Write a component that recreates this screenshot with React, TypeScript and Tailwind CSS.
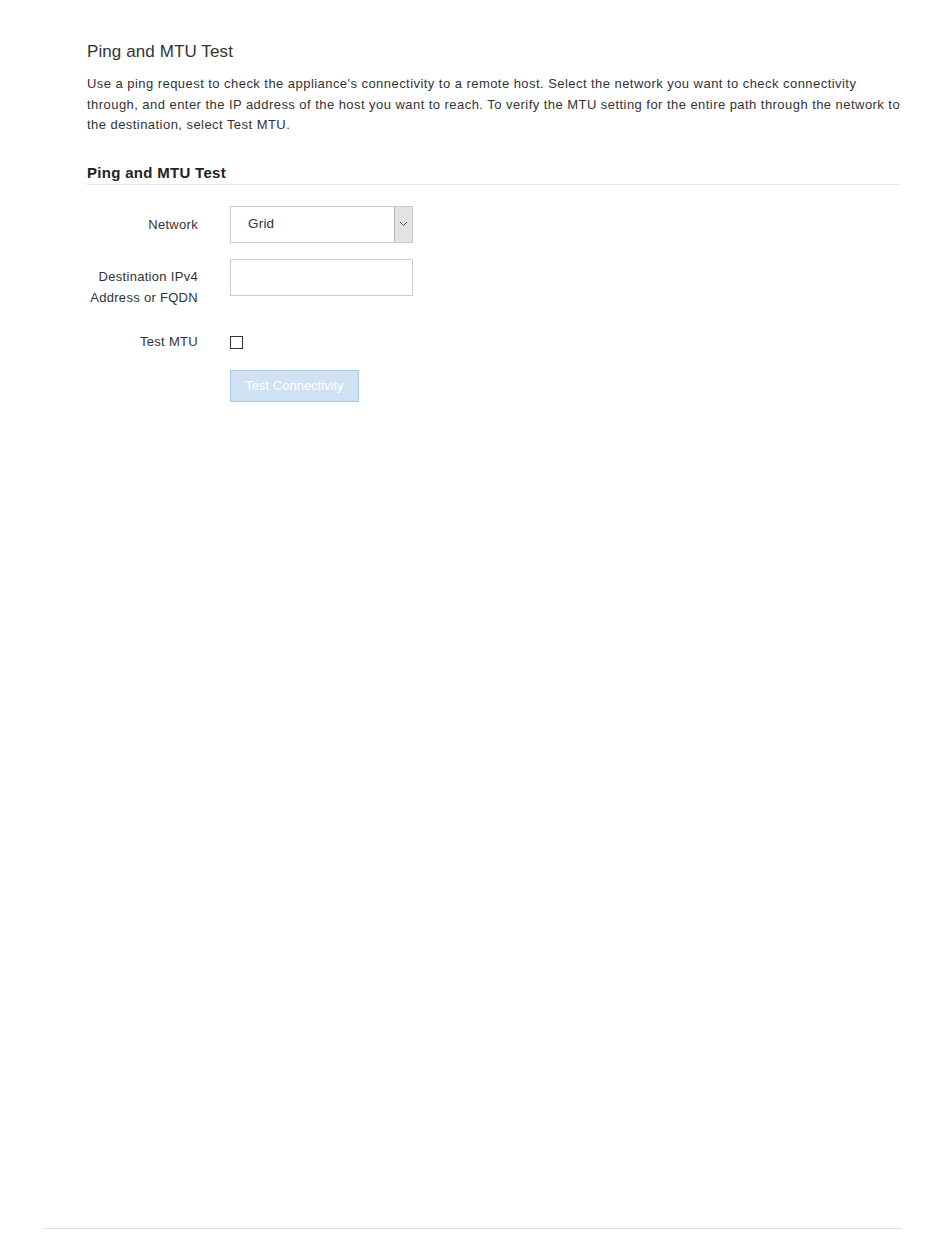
import React from "react";

export default function App() {
  return (
    <div
      className="flex h-[1248px] w-[950px] flex-col bg-white text-[#333]"
      style={{ fontFamily: '"Liberation Sans", Arial, sans-serif' }}
    >
      <div className="flex-1 pl-[87px] pr-[50px] pt-[40px]">
        <h1 className="text-[17px] leading-[24px] font-normal tracking-[0.1px] text-[#333]">Ping and MTU Test</h1>
        <p className="mt-[10px] -mr-[6px] text-[13px] leading-[20.5px] tracking-[0.45px] text-[#333]">
          Use a ping request to check the appliance's connectivity to a remote host. Select the network you want to check connectivity
          through, and enter the IP address of the host you want to reach. To verify the MTU setting for the entire path through the network to
          the destination, select Test MTU.
        </p>
        <h2 className="mt-[27px] border-b border-[#e5e5e5] pb-[1px] text-[15px] leading-[20px] font-bold tracking-[0.3px] text-[#222]">
          Ping and MTU Test
        </h2>

        <div className="mt-[21px] flex items-center gap-[32px]">
          <label className="w-[111px] text-right text-[13px] leading-[21px] tracking-[0.3px]">Network</label>
          <div className="flex h-[37px] w-[183px] items-stretch border border-[#cccccc] bg-white">
            <div className="flex flex-1 items-center pl-[17px] text-[13.5px] tracking-[0.2px]">Grid</div>
            <div className="flex w-[18px] items-center justify-center border-l border-[#b5b5b5] bg-[#e3e3e3]">
              <svg width="9" height="6" viewBox="0 0 9 6">
                <path d="M1 1 L4.5 4.5 L8 1" fill="none" stroke="#555" strokeWidth="1" />
              </svg>
            </div>
          </div>
        </div>

        <div className="mt-[16px] flex items-start gap-[32px]">
          <label className="w-[111px] pt-[7px] text-right text-[13px] leading-[21px] tracking-[0.3px]">
            Destination IPv4
            <br />
            Address or FQDN
          </label>
          <input className="h-[37px] w-[183px] border border-[#cccccc] bg-white outline-none" />
        </div>

        <div className="mt-[23px] flex items-center gap-[32px]">
          <label className="w-[111px] text-right text-[13px] leading-[21px] tracking-[0.3px]">Test MTU</label>
          <div className="mt-[2px] h-[13px] w-[13px] border border-[#333] bg-white" />
        </div>

        <div className="mt-[18px] pl-[143px]">
          <button className="h-[32px] w-[129px] border border-[#a9c8e6] bg-[#cfe2f3] text-[13px] text-white">
            Test Connectivity
          </button>
        </div>
      </div>
      <div className="ml-[45px] mr-[48px] mb-[19px] border-t border-[#dddddd]" />
    </div>
  );
}
